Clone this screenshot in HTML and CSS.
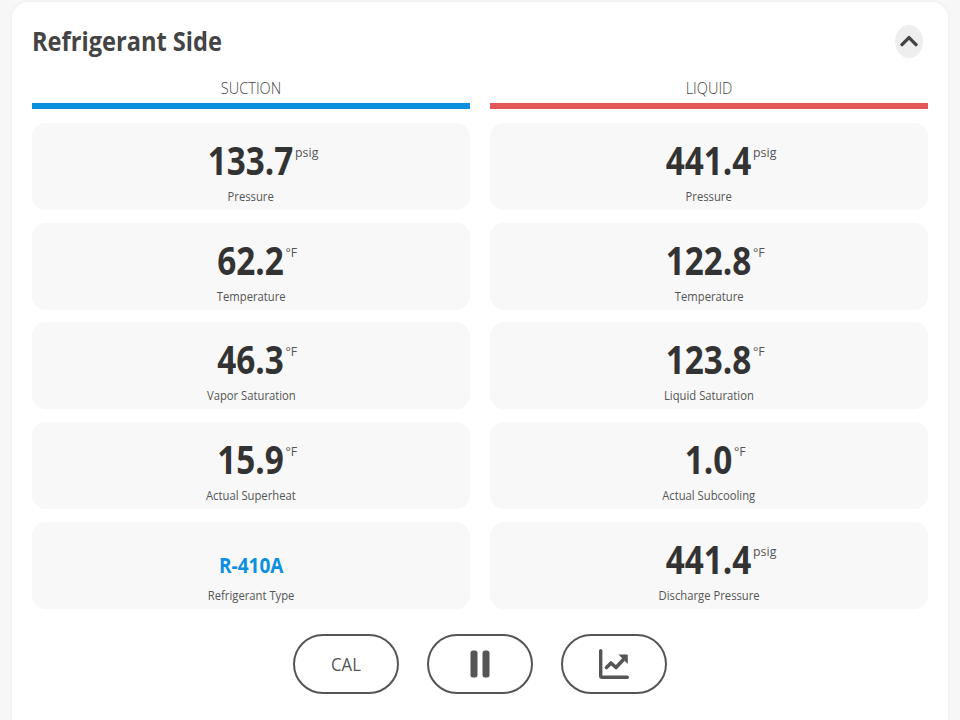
FILE: index.html
```html
<!DOCTYPE html>
<html>
<head>
  <link rel="stylesheet" href="styles.css">
</head>
<body>
  <div class="card">
    <div class="card-head">
      <h2>Refrigerant Side</h2>
      <button class="collapse">
        <svg width="18" height="12" viewBox="0 0 18 12"><path d="M2 9.6 9 2.6l7 7" fill="none" stroke="#444" stroke-width="3.4" stroke-linecap="round" stroke-linejoin="round"/></svg>
      </button>
    </div>

    <div class="columns">
      <div class="column">
        <div class="col-title">SUCTION</div>
        <div class="col-bar suction"></div>
        <div class="tile"><div class="value">133.7<sup>psig</sup></div><div class="label">Pressure</div></div>
        <div class="tile"><div class="value">62.2<sup>°F</sup></div><div class="label">Temperature</div></div>
        <div class="tile"><div class="value">46.3<sup>°F</sup></div><div class="label">Vapor Saturation</div></div>
        <div class="tile"><div class="value">15.9<sup>°F</sup></div><div class="label">Actual Superheat</div></div>
        <div class="tile"><div class="value type">R-410A</div><div class="label">Refrigerant Type</div></div>
      </div>
      <div class="column">
        <div class="col-title">LIQUID</div>
        <div class="col-bar liquid"></div>
        <div class="tile"><div class="value">441.4<sup>psig</sup></div><div class="label">Pressure</div></div>
        <div class="tile"><div class="value">122.8<sup>°F</sup></div><div class="label">Temperature</div></div>
        <div class="tile"><div class="value">123.8<sup>°F</sup></div><div class="label">Liquid Saturation</div></div>
        <div class="tile"><div class="value">1.0<sup>°F</sup></div><div class="label">Actual Subcooling</div></div>
        <div class="tile"><div class="value">441.4<sup>psig</sup></div><div class="label">Discharge Pressure</div></div>
      </div>
    </div>

    <div class="actions">
      <button class="pill"><span class="pill-text">CAL</span></button>
      <button class="pill">
        <svg width="20" height="28" viewBox="0 0 20 28"><rect x="0.5" y="0.5" width="7" height="27" rx="2.5" fill="#555"/><rect x="12.5" y="0.5" width="7" height="27" rx="2.5" fill="#555"/></svg>
      </button>
      <button class="pill">
        <svg width="30" height="30" viewBox="0 0 30 30">
          <path d="M1.7 1.7v25a1.6 1.6 0 0 0 1.6 1.6h25" fill="none" stroke="#555" stroke-width="3.4" stroke-linecap="round"/>
          <path d="M7.5 18.5l4.5-4.5 5 4.5 7-7.5" fill="none" stroke="#555" stroke-width="3.6" stroke-linecap="round" stroke-linejoin="round"/>
          <path d="M19.5 5.5H28a.8.8 0 0 1 .8.8V15Z" fill="#555"/>
        </svg>
      </button>
    </div>
  </div>
</body>
</html>
```

FILE: styles.css
```css
html, body {
  height: 100%;
}

body {
  margin: 0;
  overflow: hidden;
  background-color: #F7F7F7;
  font-family: 'Open Sans', sans-serif;
  color: #333;
}

.card {
  box-sizing: border-box;
  height: 740px;
  margin: 2px 12px 0;
  padding: 0 20px;
  background-color: #FFF;
  border-radius: 16px;
  box-shadow: 0 0 4px rgba(0, 0, 0, 0.06);
}

.card-head {
  display: flex;
  align-items: center;
  justify-content: space-between;
  height: 78px;
}

h2 {
  margin: 0 0 2px;
  font-size: 27px;
  font-weight: 700;
  color: #444;
  transform: scaleX(0.875);
  transform-origin: left center;
}

.collapse {
  display: flex;
  align-items: center;
  justify-content: center;
  width: 28px;
  height: 33px;
  margin-right: 5px;
  padding: 0;
  border: none;
  border-radius: 50%;
  background-color: #EEE;
}

.columns {
  display: flex;
  gap: 20px;
}

.column {
  flex: 1;
  display: flex;
  flex-direction: column;
  gap: 12.75px;
}

.col-title {
  height: 17px;
  margin-bottom: -9.75px;
  font-size: 16px;
  font-weight: 300;
  line-height: 17px;
  text-align: center;
  color: #444;
  transform: scaleX(0.91);
}

.col-bar {
  height: 6px;
  margin-top: 3px;
}

.col-bar.suction {
  background-color: #0B8FDF;
}

.col-bar.liquid {
  background-color: #E55757;
}

.tile {
  display: flex;
  flex-direction: column;
  align-items: center;
  height: 87px;
  margin-top: 1px;
  margin-bottom: -1px;
  border-radius: 14px;
  background-color: #F8F8F8;
}

.value {
  position: relative;
  height: 54px;
  margin-top: 12px;
  font-size: 38.5px;
  font-weight: 700;
  line-height: 50px;
  color: #333;
  transform: scaleX(0.865);
}

.value sup {
  position: absolute;
  left: 100%;
  top: 9px;
  margin-left: 2px;
  font-size: 13.5px;
  font-weight: 400;
  line-height: 16px;
  color: #555;
  transform: scaleX(1.06);
  transform-origin: left center;
}

.value.type {
  margin-top: 15px;
  height: 51px;
  font-size: 22px;
  line-height: 55px;
  color: #0B8FDF;
}

.label {
  font-size: 12.5px;
  line-height: 16px;
  font-weight: 500;
  color: #555;
  transform: scaleX(0.9);
}

.actions {
  display: flex;
  justify-content: center;
  gap: 28px;
  margin-top: 26px;
}

.pill {
  display: flex;
  align-items: center;
  justify-content: center;
  width: 106px;
  height: 60px;
  padding: 0;
  border: 2px solid #555;
  border-radius: 30px;
  background-color: #FFF;
  font-family: inherit;
  font-size: 19px;
  color: #555;
}

.pill-text {
  transform: scaleX(0.88);
}
```
